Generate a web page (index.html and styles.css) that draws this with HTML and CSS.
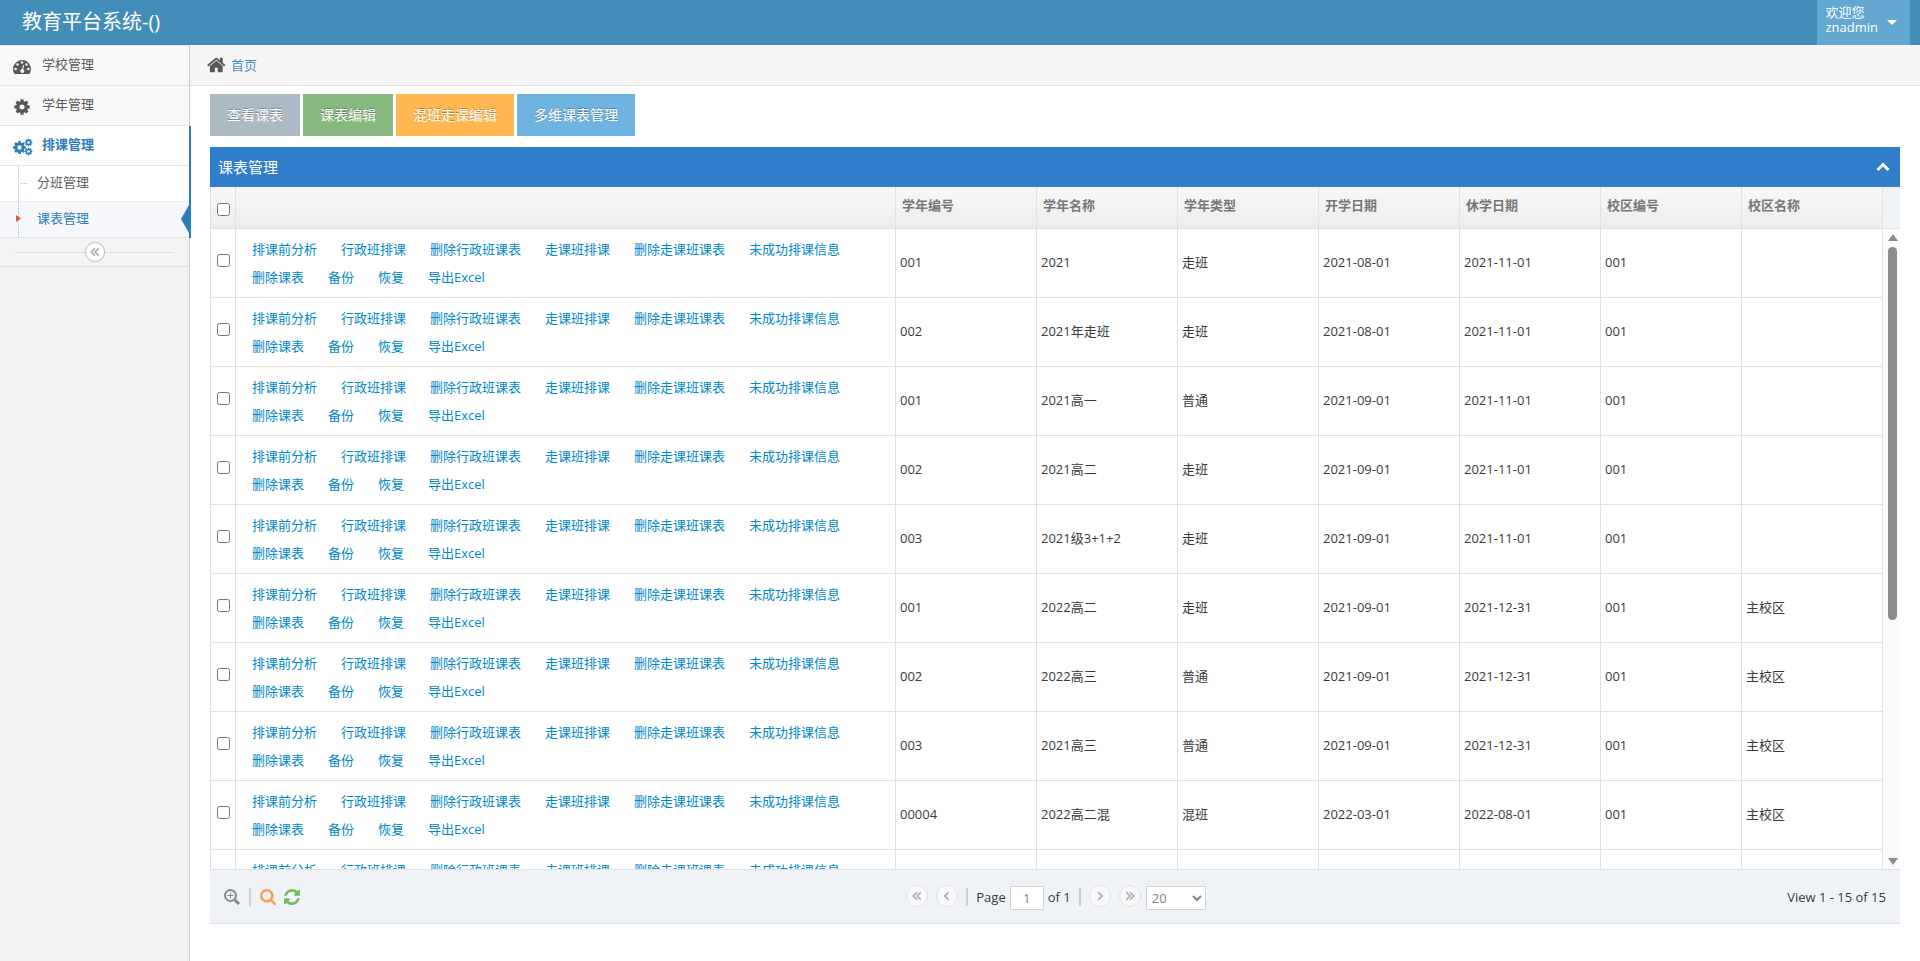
FILE: index.html
```html
<!DOCTYPE html>
<html lang="zh-CN">
<head>
<meta charset="utf-8">
<title>教育平台系统</title>
<link rel="stylesheet" href="styles.css">
</head>
<body>
<svg class="sprite" aria-hidden="true">
  <symbol id="cog" viewBox="0 0 1792 1792"><path d="M1152 896q0-106-75-181t-181-75-181 75-75 181 75 181 181 75 181-75 75-181zm512-109v222q0 12-8 23t-20 13l-185 28q-19 54-39 91 35 50 107 138 10 12 10 25t-9 23q-27 37-99 108t-94 71q-12 0-26-9l-138-108q-44 23-91 38-16 136-29 186-7 28-36 28h-222q-14 0-24.500-8.500t-11.500-21.500l-28-184q-49-16-90-37l-141 107q-10 9-25 9-14 0-25-11-126-114-165-168-7-10-7-23 0-12 8-23 15-21 51-66.500t54-70.500q-27-50-41-99l-183-27q-13-2-21-12.500t-8-23.500v-222q0-12 8-23t19-13l186-28q14-46 39-92-40-57-107-138-10-12-10-24 0-10 9-23 26-36 98.500-107.500t94.500-71.500q13 0 26 10l138 107q44-23 91-38 16-136 29-186 7-28 36-28h222q14 0 24.500 8.500t11.500 21.500l28 184q49 16 90 37l142-107q9-9 24-9 13 0 25 10 129 119 165 170 7 8 7 22 0 12-8 23-15 21-51 66.500t-54 70.500q26 50 41 98l183 28q13 2 21 12.500t8 23.500z"/></symbol>
  <symbol id="search" viewBox="64 128 1664 1664"><path d="M1216 832q0-185-131.500-316.500t-316.500-131.500-316.500 131.500-131.500 316.500 131.500 316.500 316.500 131.500 316.500-131.500 131.500-316.500zm512 832q0 52-38 90t-90 38q-54 0-90-38l-343-342q-179 124-399 124-143 0-273.500-55.500t-225-150-150-225-55.500-273.500 55.500-273.500 150-225 225-150 273.500-55.500 273.500 55.500 225 150 150 225 55.500 273.500q0 220-124 399l343 343q37 37 37 90z"/></symbol>
</svg>

<header class="navbar">
  <a class="brand" href="#">教育平台系统-()</a>
  <button class="user" type="button">
    <span class="user-name">欢迎您<br>znadmin</span>
    <span class="caret"></span>
  </button>
</header>

<div class="layout">
  <nav class="sidebar">
    <ul class="menu">
      <li><a class="menu-link" href="#">
        <svg class="menu-icon" viewBox="0 0 18 18"><path fill-rule="evenodd" d="M9 2a9 9 0 0 0-9 9c0 1.700.5 3.300 1.400 4.700.1.200.3.300.6.300h14c.3 0 .5-.1.600-.3A9 9 0 0 0 9 2zM2.600 9.700a1.250 1.250 0 1 1 0 2.500 1.250 1.250 0 0 1 0-2.500zM4.500 5.300a1.250 1.250 0 1 1 0 2.500 1.250 1.250 0 0 1 0-2.500zM9 3.300a1.250 1.250 0 1 1 0 2.500 1.250 1.250 0 0 1 0-2.500zM13.500 5.300a1.250 1.250 0 1 1 0 2.500 1.250 1.250 0 0 1 0-2.500zM15.400 9.700a1.250 1.250 0 1 1 0 2.500 1.250 1.250 0 0 1 0-2.500zM10.200 7l1 .3-1 3.900a2 2 0 1 1-1.100-.2z"/></svg>
        <span>学校管理</span></a></li>
      <li><a class="menu-link" href="#">
        <svg class="menu-icon"><use href="#cog"/></svg>
        <span>学年管理</span></a></li>
      <li class="open"><a class="menu-link" href="#">
        <svg class="menu-icon wide" viewBox="0 0 20 18"><use href="#cog" x="-1" y="2" width="15" height="15"/><use href="#cog" x="11" y="0" width="9" height="9"/><use href="#cog" x="11" y="9" width="9" height="9"/></svg>
        <span>排课管理</span></a>
        <ul class="submenu">
          <li><a class="sub-link" href="#">分班管理</a></li>
          <li class="active"><a class="sub-link" href="#">课表管理</a></li>
        </ul>
      </li>
    </ul>
    <div class="collapse">
      <button class="collapse-btn" type="button" aria-label="收起菜单"><svg viewBox="0 0 12 12"><path d="M6 1.500 1.500 6 6 10.500M10.500 1.500 6 6l4.500 4.500"/></svg></button>
    </div>
  </nav>

  <main class="main">
    <div class="breadcrumbs">
      <svg class="home" viewBox="0 0 1792 1792"><path d="M1408 992v480q0 26-19 45t-45 19h-384v-384h-256v384h-384q-26 0-45-19t-19-45v-480q0-1 .5-3t.5-3l575-474 575 474q1 2 1 6zm223-69l-62 74q-8 9-21 11h-3q-13 0-21-7l-692-577-692 577q-12 8-24 7-13-2-21-11l-62-74q-8-10-7-23.500t11-21.500l719-599q32-26 76-26t76 26l244 204v-195q0-14 9-23t23-9h192q14 0 23 9t9 23v408l219 182q10 8 11 21.500t-7 23.500z"/></svg>
      <a href="#">首页</a>
    </div>

    <div class="content">
      <div class="actions">
        <button class="btn grey" type="button">查看课表</button>
        <button class="btn green" type="button">课表编辑</button>
        <button class="btn orange" type="button">混班走课编辑</button>
        <button class="btn blue" type="button">多维课表管理</button>
      </div>

      <section class="grid">
        <div class="caption">
          <h2>课表管理</h2>
          <button class="fold" type="button" aria-label="折叠"><svg viewBox="0 0 14 10"><path d="M1.500 8 7 2.500 12.500 8"/></svg></button>
        </div>
        <div class="viewport">
          <table class="table">
            <colgroup><col class="col-check"><col><col class="col-data" span="7"></colgroup>
            <thead>
              <tr><th><input type="checkbox" aria-label="全选"></th><th></th><th>学年编号</th><th>学年名称</th><th>学年类型</th><th>开学日期</th><th>休学日期</th><th>校区编号</th><th>校区名称</th></tr>
            </thead>
            <tbody id="rows"></tbody>
          </table>
          <div class="scroll">
            <div class="scroll-head"></div>
            <div class="scroll-track">
              <span class="arrow up"></span>
              <span class="thumb"></span>
              <span class="arrow down"></span>
            </div>
          </div>
        </div>
        <div class="pager">
          <div class="tools">
            <button class="tool view" type="button" aria-label="查看"><svg viewBox="0 0 16 16"><circle cx="6.500" cy="6.500" r="5.500"/><path d="M3.500 6.500h6M6.500 3.500v6"/><path class="handle" d="m11 11 4 4"/></svg></button>
            <span class="sep"></span>
            <button class="tool find" type="button" aria-label="搜索"><svg><use href="#search"/></svg></button>
            <button class="tool reload" type="button" aria-label="刷新"><svg viewBox="128 128 1536 1536"><path d="M1639 1056q0 5-1 7-64 268-268 434.500t-478 166.500q-146 0-282.500-55t-243.500-157l-129 129q-19 19-45 19t-45-19-19-45v-448q0-26 19-45t45-19h448q26 0 45 19t19 45-19 45l-137 137q71 66 161 102t187 36q134 0 250-65t186-179q11-17 53-117 8-23 30-23h192q13 0 22.500 9.500t9.500 22.500zm25-800v448q0 26-19 45t-45 19h-448q-26 0-45-19t-19-45 19-45l138-138q-148-137-349-137-134 0-250 65t-186 179q-11 17-53 117-8 23-30 23h-199q-13 0-22.500-9.500t-9.500-22.500v-7q65-268 270-434.500t480-166.500q146 0 284 55.500t245 156.500l130-129q19-19 45-19t45 19 19 45z"/></svg></button>
          </div>
          <div class="pages">
            <button class="round" type="button" aria-label="第一页"><svg viewBox="0 0 12 12"><path d="M6 1.500 1.500 6 6 10.500M10.500 1.500 6 6l4.500 4.500"/></svg></button>
            <button class="round" type="button" aria-label="上一页"><svg viewBox="0 0 12 12"><path d="M8 1.500 3.500 6 8 10.500"/></svg></button>
            <span class="sep"></span>
            <label class="page-label">Page <input class="page-input" type="text" value="1"></label>
            <span class="page-total">of 1</span>
            <span class="sep"></span>
            <button class="round" type="button" aria-label="下一页"><svg viewBox="0 0 12 12"><path d="M4 1.500 8.500 6 4 10.500"/></svg></button>
            <button class="round" type="button" aria-label="最后一页"><svg viewBox="0 0 12 12"><path d="M6 1.500 10.500 6 6 10.500M1.500 1.500 6 6l-4.500 4.500"/></svg></button>
            <select class="page-size" aria-label="每页条数"><option>10</option><option selected>20</option><option>30</option></select>
          </div>
          <div class="info">View 1 - 15 of 15</div>
        </div>
      </section>
    </div>
  </main>
</div>
<script src="app.js"></script>
</body>
</html>
```
FILE: styles.css
```css
* { box-sizing: border-box; }

body {
  margin: 0;
  min-height: 100vh;
  display: flex;
  flex-direction: column;
  background: #fff;
  color: #393939;
  font: 13px/20px "Open Sans", "Noto Sans CJK SC", sans-serif;
}

a { text-decoration: none; }
ul { list-style: none; margin: 0; padding: 0; }
button, input, select { font: inherit; margin: 0; }
button { border: 0; padding: 0; background: none; cursor: pointer; }
.sprite { display: none; }

/* Top bar */
.navbar {
  display: flex;
  justify-content: space-between;
  height: 45px;
  padding: 0 10px 0 22px;
  background: #438eb9;
}
.brand { color: #fff; font-size: 20px; line-height: 43px; }
.user {
  display: flex;
  align-items: center;
  gap: 9px;
  padding: 0 13px 5px 8px;
  background: #62a8d1;
  color: #fff;
  text-align: left;
  line-height: 15px;
}
.caret {
  border: 5px solid transparent;
  border-top-color: #fff;
  border-bottom: 0;
  margin-top: 4px;
}

/* Side menu */
.layout { display: flex; flex: 1; }
.sidebar {
  flex: 0 0 190px;
  background: #f2f2f2;
  border-top: 1px solid #e5e5e5;
  border-right: 1px solid #ccc;
}
.menu-link {
  display: flex;
  align-items: center;
  height: 40px;
  padding: 0 0 3px 13px;
  background: #f8f8f8;
  border-bottom: 1px solid #e5e5e5;
  color: #585858;
}
.menu-icon { width: 18px; height: 18px; margin: 5px 11px 0 0; fill: currentColor; }
.menu-icon.wide { width: 20px; margin-right: 9px; }
.open { position: relative; background: #fff; }
.open::after {
  content: "";
  position: absolute;
  top: 0;
  bottom: 0;
  right: -2px;
  width: 2px;
  background: #2b7dbc;
}
.open > .menu-link { background: #fff; color: #2b7dbc; font-weight: bold; }
.submenu { position: relative; border-bottom: 1px solid #e5e5e5; }
.submenu::before {
  content: "";
  position: absolute;
  z-index: 1;
  top: 0;
  bottom: 0;
  left: 18px;
  border-left: 1px dotted #9dbdd6;
}
.submenu li { position: relative; }
.submenu li + li { border-top: 1px dotted #e4e4e4; }
.sub-link { display: block; padding: 6px 0 9px 37px; color: #616161; }
.submenu li::before {
  content: "";
  position: absolute;
  top: 17px;
  left: 20px;
  width: 7px;
  border-top: 1px dotted #9dbdd6;
}
.submenu .active { background: #f5f7fa; }
.active .sub-link { color: #2b7dbc; }
.submenu .active::before {
  z-index: 2;
  top: 9px;
  left: 16px;
  width: 5px;
  height: 15px;
  background: #c86139;
  border: 0;
  clip-path: polygon(0 27%, 100% 50%, 0 73%);
}
.active::after {
  content: "";
  position: absolute;
  top: 3px;
  right: 0;
  border: 14px solid transparent;
  border-right: 8px solid #2b7dbc;
  border-left: 0;
}
.collapse {
  display: flex;
  align-items: center;
  height: 29px;
  padding: 0 15px;
  border-bottom: 1px solid #e0e0e0;
  background: #f3f3f3;
}
.collapse::before, .collapse::after {
  content: "";
  flex: 1;
  border-top: 1px solid #e0e0e0;
}
.collapse-btn {
  display: grid;
  place-items: center;
  width: 20px;
  height: 20px;
  border: 1px solid #bbb;
  border-radius: 50%;
  background: #fff;
}
.collapse-btn svg, .round svg {
  width: 10px;
  height: 10px;
  fill: none;
  stroke: #aaa;
  stroke-width: 2;
}

/* Main column */
.main { flex: 1; min-width: 0; }
.breadcrumbs {
  display: flex;
  align-items: center;
  gap: 4px;
  height: 41px;
  padding: 0 0 1px 17px;
  background: #f5f5f5;
  border-bottom: 1px solid #e5e5e5;
}
.breadcrumbs a { color: #4c8fbd; }
.home { width: 20px; height: 20px; fill: #585858; }
.content { padding: 8px 20px 24px; }

.actions { display: flex; gap: 3px; margin-bottom: 11px; }
.btn {
  height: 42px;
  padding: 0 17px;
  color: #fff;
  font-size: 14px;
  text-shadow: 0 -1px 0 rgba(0, 0, 0, 0.25);
}
.grey { background: #abbac3; }
.green { background: #87b87f; }
.orange { background: #ffb752; }
.blue { background: #6fb3e0; }

/* Data grid */
.caption {
  display: flex;
  align-items: center;
  justify-content: space-between;
  height: 40px;
  padding: 0 10px 0 8px;
  background: #307ecc;
  color: #fff;
}
.caption h2 { margin: 0; font-size: 15px; font-weight: normal; }
.fold svg { display: block; width: 14px; height: 10px; fill: none; stroke: #fff; stroke-width: 3; }

.viewport {
  display: flex;
  height: 683px;
  overflow: hidden;
  border-bottom: 1px solid #e1e1e1;
}
.table {
  flex: 1;
  width: 100%;
  height: max-content;
  table-layout: fixed;
  border-collapse: separate;
  border-spacing: 0;
  border-left: 1px solid #e1e1e1;
}
.col-check { width: 25px; }
.col-data { width: 141px; }
.table th, .table td {
  padding: 0 4px 2px;
  border-right: 1px solid #e1e1e1;
  border-bottom: 1px solid #e1e1e1;
  text-align: left;
}
.table th {
  height: 42px;
  padding: 0 6px 5px;
  background: linear-gradient(#f8f8f8, #ececec);
  color: #777;
  font-weight: bold;
}
.table td { height: 69px; }
.table tr > :first-child { padding: 0; text-align: center; }
.table input { display: block; width: 13px; height: 13px; margin: 0 auto 6px; }
.table th input { margin: 4px auto 0; }
.table .ops-cell { padding: 0 16px 1px; }
.ops { display: flex; flex-wrap: wrap; column-gap: 24px; line-height: 28px; }
.ops a { color: #08c; }

.scroll { flex: 0 0 17px; display: flex; flex-direction: column; }
.scroll-head { height: 42px; background: #eff3f8; border-bottom: 1px solid #e1e1e1; }
.scroll-track {
  flex: 1;
  display: flex;
  flex-direction: column;
  align-items: center;
  padding: 5px 0 4px;
  margin-left: 2px;
  background: #fcfcfc;
}
.arrow { border: 5px solid transparent; }
.arrow.up { border-top: 0; border-bottom: 7px solid #8b8b8b; }
.arrow.down { border-bottom: 0; border-top: 7px solid #8b8b8b; margin-top: auto; }
.thumb { width: 9px; height: 373px; margin-top: 6px; border-radius: 5px; background: #8b8b8b; }

/* Pager */
.pager {
  display: grid;
  grid-template-columns: 1fr auto 1fr;
  align-items: center;
  height: 54px;
  padding: 0 14px;
  background: #eff3f8;
  border-bottom: 1px solid #e1e1e1;
}
.tools, .pages, .page-label { display: flex; align-items: center; }
.sep { width: 2px; height: 18px; background: #c5d3d9; }
.tools .sep { margin: 0 9px; }
.tool svg { display: block; width: 16px; height: 16px; }
.view svg { fill: none; stroke: #888; stroke-width: 2; }
.view path { stroke-width: 1; }
.view .handle { stroke-width: 3; }
.find svg { fill: #fe9e4d; }
.reload { margin-left: 8px; }
.reload svg { fill: #76b957; }
.pages { gap: 8px; padding-left: 2px; }
.round {
  display: grid;
  place-items: center;
  width: 22px;
  height: 22px;
  margin-bottom: 2px;
  border: 1px solid #e0e0e0;
  border-radius: 50%;
  background: #f8f8f8;
}
.page-label { gap: 4px; }
.page-total { margin-left: -4px; }
.page-input, .page-size {
  height: 24px;
  margin-top: 2px;
  border: 1px solid #d5d5d5;
  border-radius: 0;
  background: #fff;
  color: #858585;
}
.page-input { width: 34px; padding: 0; text-align: center; }
.page-size { width: 60px; margin-left: -3px; padding: 0 0 0 1px; }
.info { text-align: right; }
```
FILE: app.js
```js
const ops = ["排课前分析", "行政班排课", "删除行政班课表", "走课班排课", "删除走课班课表", "未成功排课信息", "删除课表", "备份", "恢复", "导出Excel"];
const data = [
  ["001", "2021", "走班", "2021-08-01", "2021-11-01", "001", ""],
  ["002", "2021年走班", "走班", "2021-08-01", "2021-11-01", "001", ""],
  ["001", "2021高一", "普通", "2021-09-01", "2021-11-01", "001", ""],
  ["002", "2021高二", "走班", "2021-09-01", "2021-11-01", "001", ""],
  ["003", "2021级3+1+2", "走班", "2021-09-01", "2021-11-01", "001", ""],
  ["001", "2022高二", "走班", "2021-09-01", "2021-12-31", "001", "主校区"],
  ["002", "2022高三", "普通", "2021-09-01", "2021-12-31", "001", "主校区"],
  ["003", "2021高三", "普通", "2021-09-01", "2021-12-31", "001", "主校区"],
  ["00004", "2022高二混", "混班", "2022-03-01", "2022-08-01", "001", "主校区"],
  ["", "", "", "", "", "", ""]
];
const links = ops.map(name => `<a href="#">${name}</a>`).join("");
document.getElementById("rows").innerHTML = data.map(row =>
  `<tr><td><input type="checkbox" aria-label="选择"></td><td class="ops-cell"><div class="ops">${links}</div></td>` +
  row.map(value => `<td>${value}</td>`).join("") + "</tr>"
).join("");
```
